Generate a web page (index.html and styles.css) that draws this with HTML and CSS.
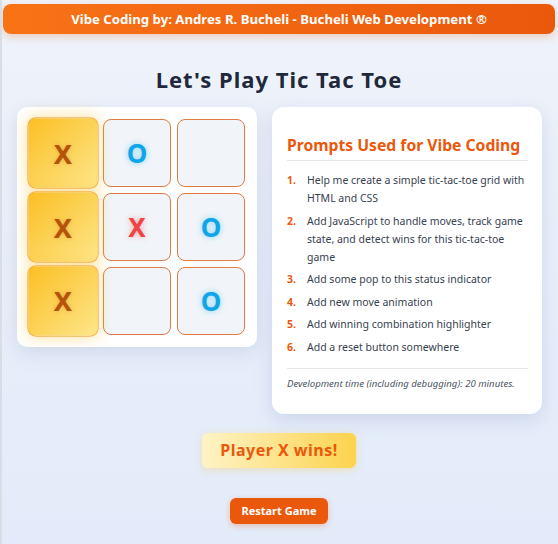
FILE: index.html
```html
<!DOCTYPE html>
<html lang="en">
<head>
<meta charset="utf-8">
<title>Tic Tac Toe</title>
<link rel="stylesheet" href="styles.css">
</head>
<body>
<div class="page">
  <header class="topbar">Vibe Coding by: Andres R. Bucheli - Bucheli Web Development ®</header>
  <h1 class="title">Let's Play Tic Tac Toe</h1>
  <div class="main">
    <div class="board-card">
      <div class="board">
        <div class="cell win"><span class="x-win">X</span></div>
        <div class="cell"><span class="o">O</span></div>
        <div class="cell"></div>
        <div class="cell win"><span class="x-win">X</span></div>
        <div class="cell"><span class="x">X</span></div>
        <div class="cell"><span class="o">O</span></div>
        <div class="cell win"><span class="x-win">X</span></div>
        <div class="cell"></div>
        <div class="cell"><span class="o">O</span></div>
      </div>
    </div>
    <div class="prompts">
      <h2 class="prompts-title">Prompts Used for Vibe Coding</h2>
      <ol class="prompt-list">
        <li><span class="num">1.</span><span class="txt">Help me create a simple tic-tac-toe grid with HTML and CSS</span></li>
        <li><span class="num">2.</span><span class="txt">Add JavaScript to handle moves, track game state, and detect wins for this tic-tac-toe game</span></li>
        <li><span class="num">3.</span><span class="txt">Add some pop to this status indicator</span></li>
        <li><span class="num">4.</span><span class="txt">Add new move animation</span></li>
        <li><span class="num">5.</span><span class="txt">Add winning combination highlighter</span></li>
        <li><span class="num">6.</span><span class="txt">Add a reset button somewhere</span></li>
      </ol>
      <p class="devtime">Development time (including debugging): 20 minutes.</p>
    </div>
  </div>
  <div class="status">Player X wins!</div>
  <button class="restart">Restart Game</button>
</div>
</body>
</html>
```

FILE: styles.css
```css
html, body {
  margin: 0;
  padding: 0;
}
body {
  width: 558px;
  height: 544px;
  overflow: hidden;
  box-sizing: border-box;
  border-left: 2px solid #d8dde6;
  background: linear-gradient(180deg, #eff3fa 0%, #e3ebfa 100%);
  font-family: "Noto Sans", "Open Sans", sans-serif;
  color: #1e293b;
}
.page {
  display: flex;
  flex-direction: column;
  align-items: center;
  padding: 4px 3px 0 1px;
}
.topbar {
  align-self: stretch;
  height: 30px;
  display: flex;
  align-items: center;
  justify-content: center;
  background: linear-gradient(90deg, #f97316 0%, #ea580c 100%);
  color: #fff;
  font-weight: 700;
  font-size: 13.2px;
  border-radius: 8px;
  box-shadow: 0 3px 8px rgba(234, 88, 12, 0.25);
}
.title {
  margin: 30px 0 0;
  font-size: 22px;
  letter-spacing: 1px;
  font-weight: 700;
  line-height: 30px;
  color: #1e293b;
}
.main {
  display: flex;
  align-items: flex-start;
  gap: 15px;
  margin: 13px 0 0 1px;
  width: 525px;
}
.board-card {
  background: #fff;
  border-radius: 10px;
  padding: 12px;
  box-shadow: 0 6px 20px rgba(100, 120, 180, 0.18);
}
.board {
  display: grid;
  grid-template-columns: repeat(3, 68px);
  grid-template-rows: repeat(3, 68px);
  gap: 6px;
}
.cell {
  box-sizing: border-box;
  background: #f1f5f9;
  border: 1px solid #e07a45;
  border-radius: 8px;
  display: flex;
  align-items: center;
  justify-content: center;
  font-size: 26px;
  font-weight: 700;
}
.cell.win {
  transform: scale(1.05);
  background: linear-gradient(135deg, #fbbf24 0%, #fde68a 100%);
  border-color: #f2b04a;
  box-shadow: 0 0 14px rgba(251, 191, 36, 0.45);
}
.x-win {
  color: #b45309;
  text-shadow: 0 0 4px rgba(180, 83, 9, 0.3);
}
.x {
  color: #ef4444;
  text-shadow: 0 0 6px rgba(239, 68, 68, 0.45);
}
.o {
  color: #0ea5e9;
  text-shadow: 0 0 6px rgba(14, 165, 233, 0.45);
}
.prompts {
  flex: 1;
  background: #fff;
  border-radius: 12px;
  padding: 27px 14px 22px 15px;
  box-shadow: 0 6px 20px rgba(100, 120, 180, 0.2);
}
.prompts-title {
  margin: 0;
  padding-bottom: 4px;
  border-bottom: 1px solid #e5e7eb;
  color: #ea580c;
  font-size: 15.7px;
  font-weight: 700;
  line-height: 22px;
}
.prompt-list {
  list-style: none;
  margin: 10px 0 0;
  padding: 0 0 12px;
  display: flex;
  flex-direction: column;
  gap: 4.5px;
  border-bottom: 1px solid #e5e7eb;
}
.prompt-list li {
  display: flex;
  font-size: 10.5px;
  line-height: 18px;
  color: #374151;
}
.num {
  width: 20px;
  flex: none;
  color: #ea580c;
  font-weight: 700;
}
.devtime {
  margin: 7px 0 0;
  font-size: 9.6px;
  font-style: italic;
  color: #4b5563;
  line-height: 16px;
}
.status {
  margin-top: 19px;
  padding: 0 18px;
  height: 35px;
  display: flex;
  align-items: center;
  background: linear-gradient(90deg, #fef3c7 0%, #fcd34d 100%);
  color: #ea580c;
  font-weight: 700;
  font-size: 16px;
  border-radius: 6px;
  box-shadow: 0 2px 8px rgba(251, 191, 36, 0.3);
  letter-spacing: 0.5px;
}
.restart {
  margin-top: 30px;
  height: 26px;
  padding: 0 11px;
  border: none;
  border-radius: 6px;
  background: #ea580c;
  color: #fff;
  font-family: inherit;
  font-weight: 700;
  font-size: 11px;
  box-shadow: 0 2px 6px rgba(234, 88, 12, 0.3);
}
```
